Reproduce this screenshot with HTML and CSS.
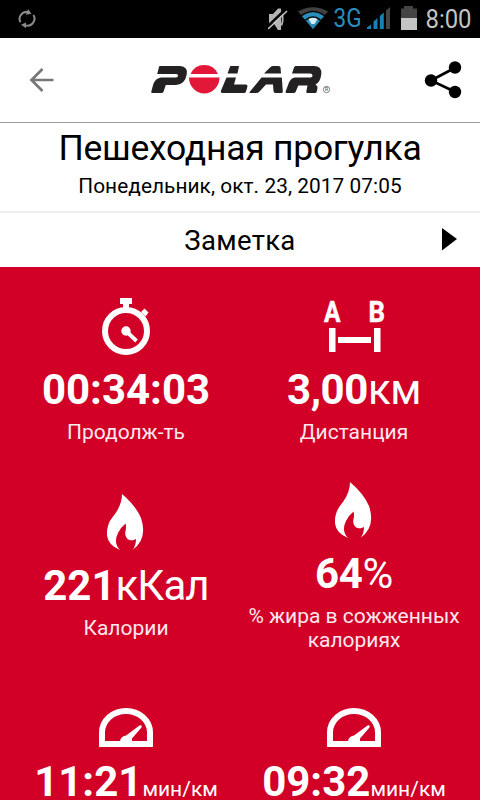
FILE: index.html
```
<!DOCTYPE html>
<html lang="ru">
<head>
<meta charset="utf-8">
<title>Polar</title>
<link rel="stylesheet" href="styles.css">
</head>
<body>
<div class="screen">
  <div class="statusbar">
    <svg class="sync" width="20" height="20" viewBox="0 0 20 20"><g fill="none" stroke="#8c8c8c" stroke-width="2"><path d="M3.4 13.2A7 7 0 0 1 11.5 3.2"/><path d="M16.4 6A7 7 0 0 1 8.5 16.4"/></g><path fill="#8c8c8c" d="M11 0l3.5 4.8-5.5 1zM9 13.5v5.8l-5-3.5z"/></svg>
    <svg width="212" height="37" viewBox="268 0 212 37">
      <path fill="#b4b4b4" d="M269 14h4l5-5.500h3V30H278l-4.500-7H269z"/>
      <path d="M281.500 12.500q2.500 6.500 0 13" fill="none" stroke="#b4b4b4" stroke-width="1.800"/>
      <path d="M267 27L286 9" stroke="#000" stroke-width="2.500"/><path d="M268 29L287 11" stroke="#c4c4c4" stroke-width="1.600"/>
      <path fill="#414141" d="M298 11.500Q313 3 328 11.500L313 29z"/>
      <path fill="#288dbb" d="M301.500 15.500Q313 7.500 324.500 15.500L313 29z"/>
      <path d="M301 15.800Q313 7 325 15.800M305.500 20.200Q313 14 320.500 20.200" stroke="#080808" stroke-width="1.500" fill="none"/>
      <path fill="#d7edf5" d="M308.500 19Q313 16.500 317.500 19L314.500 24h-3z"/>
      <path fill="#1780b4" d="M367 29v-1.500l4-3V29zM373.500 21.500l4-3.500v11h-4zM379.800 16l4-3.500V29h-4z"/>
      <path fill="#444" d="M386 10.500l4-3.500v22h-4z"/>
      <path fill="#444" d="M401 8.500h3V6h9v2.500h4V19h-16z"/><path fill="#c4c4c4" d="M401 18h16v12h-16z"/>
      <text class="net" x="333.500" y="27" textLength="28" lengthAdjust="spacingAndGlyphs">3G</text>
      <text class="clock" x="425.500" y="27.700" textLength="46" lengthAdjust="spacingAndGlyphs">8:00</text>
    </svg>
  </div>

  <header class="appbar">
    <svg width="26" height="26" viewBox="0 0 26 26"><path d="M24.500 13H3M13.500 2L2.500 13 13.500 24" fill="none" stroke="#777" stroke-width="2.700"/></svg>
    <svg class="logo" width="182" height="34" viewBox="150 63 182 34" role="img" aria-label="Polar">
      <g fill="#242122">
        <path d="M159.500 66H180Q188.300 66.500 186.700 74.500Q185 84.500 176 85H165.800L163.600 91.500Q163 93 161.500 93H152.500Q150.800 93 151.300 91.500L153.200 84.500Q155.500 78 161 77.500H176Q178 77.500 178 75.500Q178 74 176.500 74H157.200L159 67z"/>
        <path d="M230.300 66H239L237.500 73.500H227.500zM226.500 77.500H236L234 84.500H245.500Q248 84.500 247.300 87L246 91.500Q245.500 93 244 93H222.500Q220.300 93 221 90.500z"/>
        <path d="M273 66H278.500Q280.300 66 280.500 67.500L281 73.500H264L269.500 68Q271 66 273 66zM261.500 77.500H281.800L282.800 91.500Q283 93 281.200 93H275.500Q273.500 93 273.500 91L273 84.500H266L259.500 91.500Q258 93 256 93H250.500Q248.800 93 250 91.500z"/>
        <path d="M295.500 66H314Q322 66.200 321.300 74Q320.500 82 315.500 84.500Q318 86 317.500 88L316.800 91.500Q316.500 93 315 93H307.500Q306 93 306.300 91.500L307.500 85.500H298.300L295.800 91.500Q295.200 93 293.500 93H287Q285 93 285.800 91L289 82.500Q291 78 295 77.500H309.500Q312.500 77.500 312.500 75.500Q312.500 73.500 310 73.500H292L294.200 67z"/>
      </g>
      <g fill="#e31839"><path d="M190.500 74A15 15 0 0 1 218 74z"/><path d="M189 77.500H219.500A15.250 16 0 0 1 189 77.500z"/></g>
      <circle cx="326.500" cy="89.500" r="3.200" fill="none" stroke="#555" stroke-width=".7"/>
      <text class="reg" x="326.500" y="91.400" text-anchor="middle">R</text>
    </svg>
    <svg width="38" height="38" viewBox="0 0 38 38"><path d="M31.500 6.500L7 19.500 31.500 31" fill="none" stroke="#000" stroke-width="2.700"/><circle cx="31" cy="6.500" r="6.200"/><circle cx="7" cy="19.500" r="6.200"/><circle cx="31" cy="31" r="6.200"/></svg>
  </header>

  <section class="heading">
    <h1>Пешеходная прогулка</h1>
    <p>Понедельник, окт. 23, 2017 07:05</p>
  </section>
  <div class="note"><span>Заметка</span><svg class="play" width="17" height="24" viewBox="0 0 17 24"><path d="M1 0v22.500l15-11.500z"/></svg></div>

  <main class="stats">
    <div class="stat">
      <svg width="58" height="57" viewBox="97 298 58 57"><circle cx="126" cy="331" r="21" fill="none" stroke="#fff" stroke-width="6"/><path fill="#fff" d="M120 298h12v6h-3v5h-6v-5h-3zM144.500 308.500l4 4-3 4-4.500-4.500z"/><circle cx="126" cy="331" r="4.700" fill="#fff"/><path d="M126 331l10.500 10" stroke="#fff" stroke-width="3.800"/></svg>
      <div class="value time"><b>00:34:03</b></div>
      <div class="label">Продолж-ть</div>
    </div>
    <div class="stat">
      <svg width="64" height="57" viewBox="322 298 64 57"><path fill="#fff" d="M329 328h6.500v24H329zM338 337h33v6h-33zM374 328h6.500v24H374z"/><text class="ab" x="324" y="322" textLength="16.500" lengthAdjust="spacingAndGlyphs">A</text><text class="ab" x="368.500" y="322" textLength="16.500" lengthAdjust="spacingAndGlyphs">B</text></svg>
      <div class="value dist"><b>3,00</b>км</div>
      <div class="label">Дистанция</div>
    </div>
    <div class="stat">
      <svg width="38" height="57" viewBox="0 0 38 57"><path fill="#fff" d="M15 0Q29 12 34 24Q41 45 25.500 56Q29 52 29 45C22 49 17 43 18.500 37Q19.500 33 18.500 29.500Q14 33 11 39Q6 49 13 56Q-4 49 1 32Q2 27 8 20Q15 10 15 0z"/></svg>
      <div class="value kcal"><b>221</b>кКал</div>
      <div class="label">Калории</div>
    </div>
    <div class="stat">
      <svg width="38" height="57" viewBox="0 0 38 57"><path fill="#fff" d="M15 0Q29 12 34 24Q41 45 25.500 56Q29 52 29 45C22 49 17 43 18.500 37Q19.500 33 18.500 29.500Q14 33 11 39Q6 49 13 56Q-4 49 1 32Q2 27 8 20Q15 10 15 0z"/></svg>
      <div class="value pct"><b>64</b>%</div>
      <div class="label">% жира в сожженных<br>калориях</div>
    </div>
    <div class="stat">
      <svg width="54" height="57" viewBox="0 0 54 57"><path d="M3 54V42.500a24 21.500 0 0 1 48 0V54z" fill="none" stroke="#fff" stroke-width="6"/><path fill="#fff" d="M21 52q0-5.500 6-6.500L40.500 35.500q3-1 2 2L33 48.500V52z"/></svg>
      <div class="value"><b>11:21</b><small>мин/км</small></div>
      <div class="label"></div>
    </div>
    <div class="stat">
      <svg width="54" height="57" viewBox="0 0 54 57"><path d="M3 54V42.500a24 21.500 0 0 1 48 0V54z" fill="none" stroke="#fff" stroke-width="6"/><path fill="#fff" d="M21 52q0-5.500 6-6.500L40.500 35.500q3-1 2 2L33 48.500V52z"/></svg>
      <div class="value"><b>09:32</b><small>мин/км</small></div>
      <div class="label"></div>
    </div>
  </main>
</div>
</body>
</html>
```
FILE: styles.css
```
* { box-sizing: border-box; margin: 0; padding: 0; }
body { font-family: Roboto, "Noto Sans", sans-serif; background: #fff; color: #000; }
svg { display: block; flex: none; }
.screen { width: 480px; height: 800px; overflow: hidden; }
.statusbar { height: 38px; background: #000; display: flex; justify-content: space-between; padding-left: 17px; }
.sync { margin-top: 9px; }
.net { font-size: 26px; fill: #2b8dc0; }
.clock { font-size: 25px; fill: #c4c4c4; }
.reg { font-size: 5px; fill: #444; }
.appbar { height: 85px; border-bottom: 1px solid #9c9c9c; display: flex; align-items: center; justify-content: space-between; padding: 0 18px 0 29px; }
.logo { margin-left: 2px; }
.heading { height: 88px; padding-top: 3px; text-align: center; }
.heading h1 { font-size: 35.5px; font-weight: 400; line-height: 44px; letter-spacing: -0.26px; }
.heading p { margin-top: 1px; font-size: 20.8px; line-height: 30px; letter-spacing: 0.07px; }
.note { height: 56px; border-top: 2px solid #eee; display: flex; align-items: center; justify-content: flex-end; font-size: 27.5px; line-height: 32px; padding-right: 22px; }
.note span { flex: 1; text-align: center; padding-left: 39px; padding-top: 1px; letter-spacing: 0.3px; }
.stats { background: #d20026; height: 533px; padding: 6px 12px 0; display: grid; grid-template-columns: 228px 228px; grid-auto-rows: 196px; }
.stat { display: flex; flex-direction: column; align-items: center; justify-content: center; color: #fff; white-space: nowrap; }
.value { margin-top: 10px; font-size: 42px; line-height: 50px; }
.value b { font-weight: 700; }
.value small { font-size: 21px; line-height: 1; }
.dist { letter-spacing: -0.4px; }
.kcal { letter-spacing: -0.9px; }
.kcal b { letter-spacing: 0; }
.pct { letter-spacing: -0.4px; }
.label { margin-top: 5px; min-height: 24px; font-size: 21px; line-height: 24px; text-align: center; color: #fde8ee; }
.ab { font: 700 29.5px Roboto, sans-serif; fill: #fff; stroke: #fff; stroke-width: 0.5px; }
```
